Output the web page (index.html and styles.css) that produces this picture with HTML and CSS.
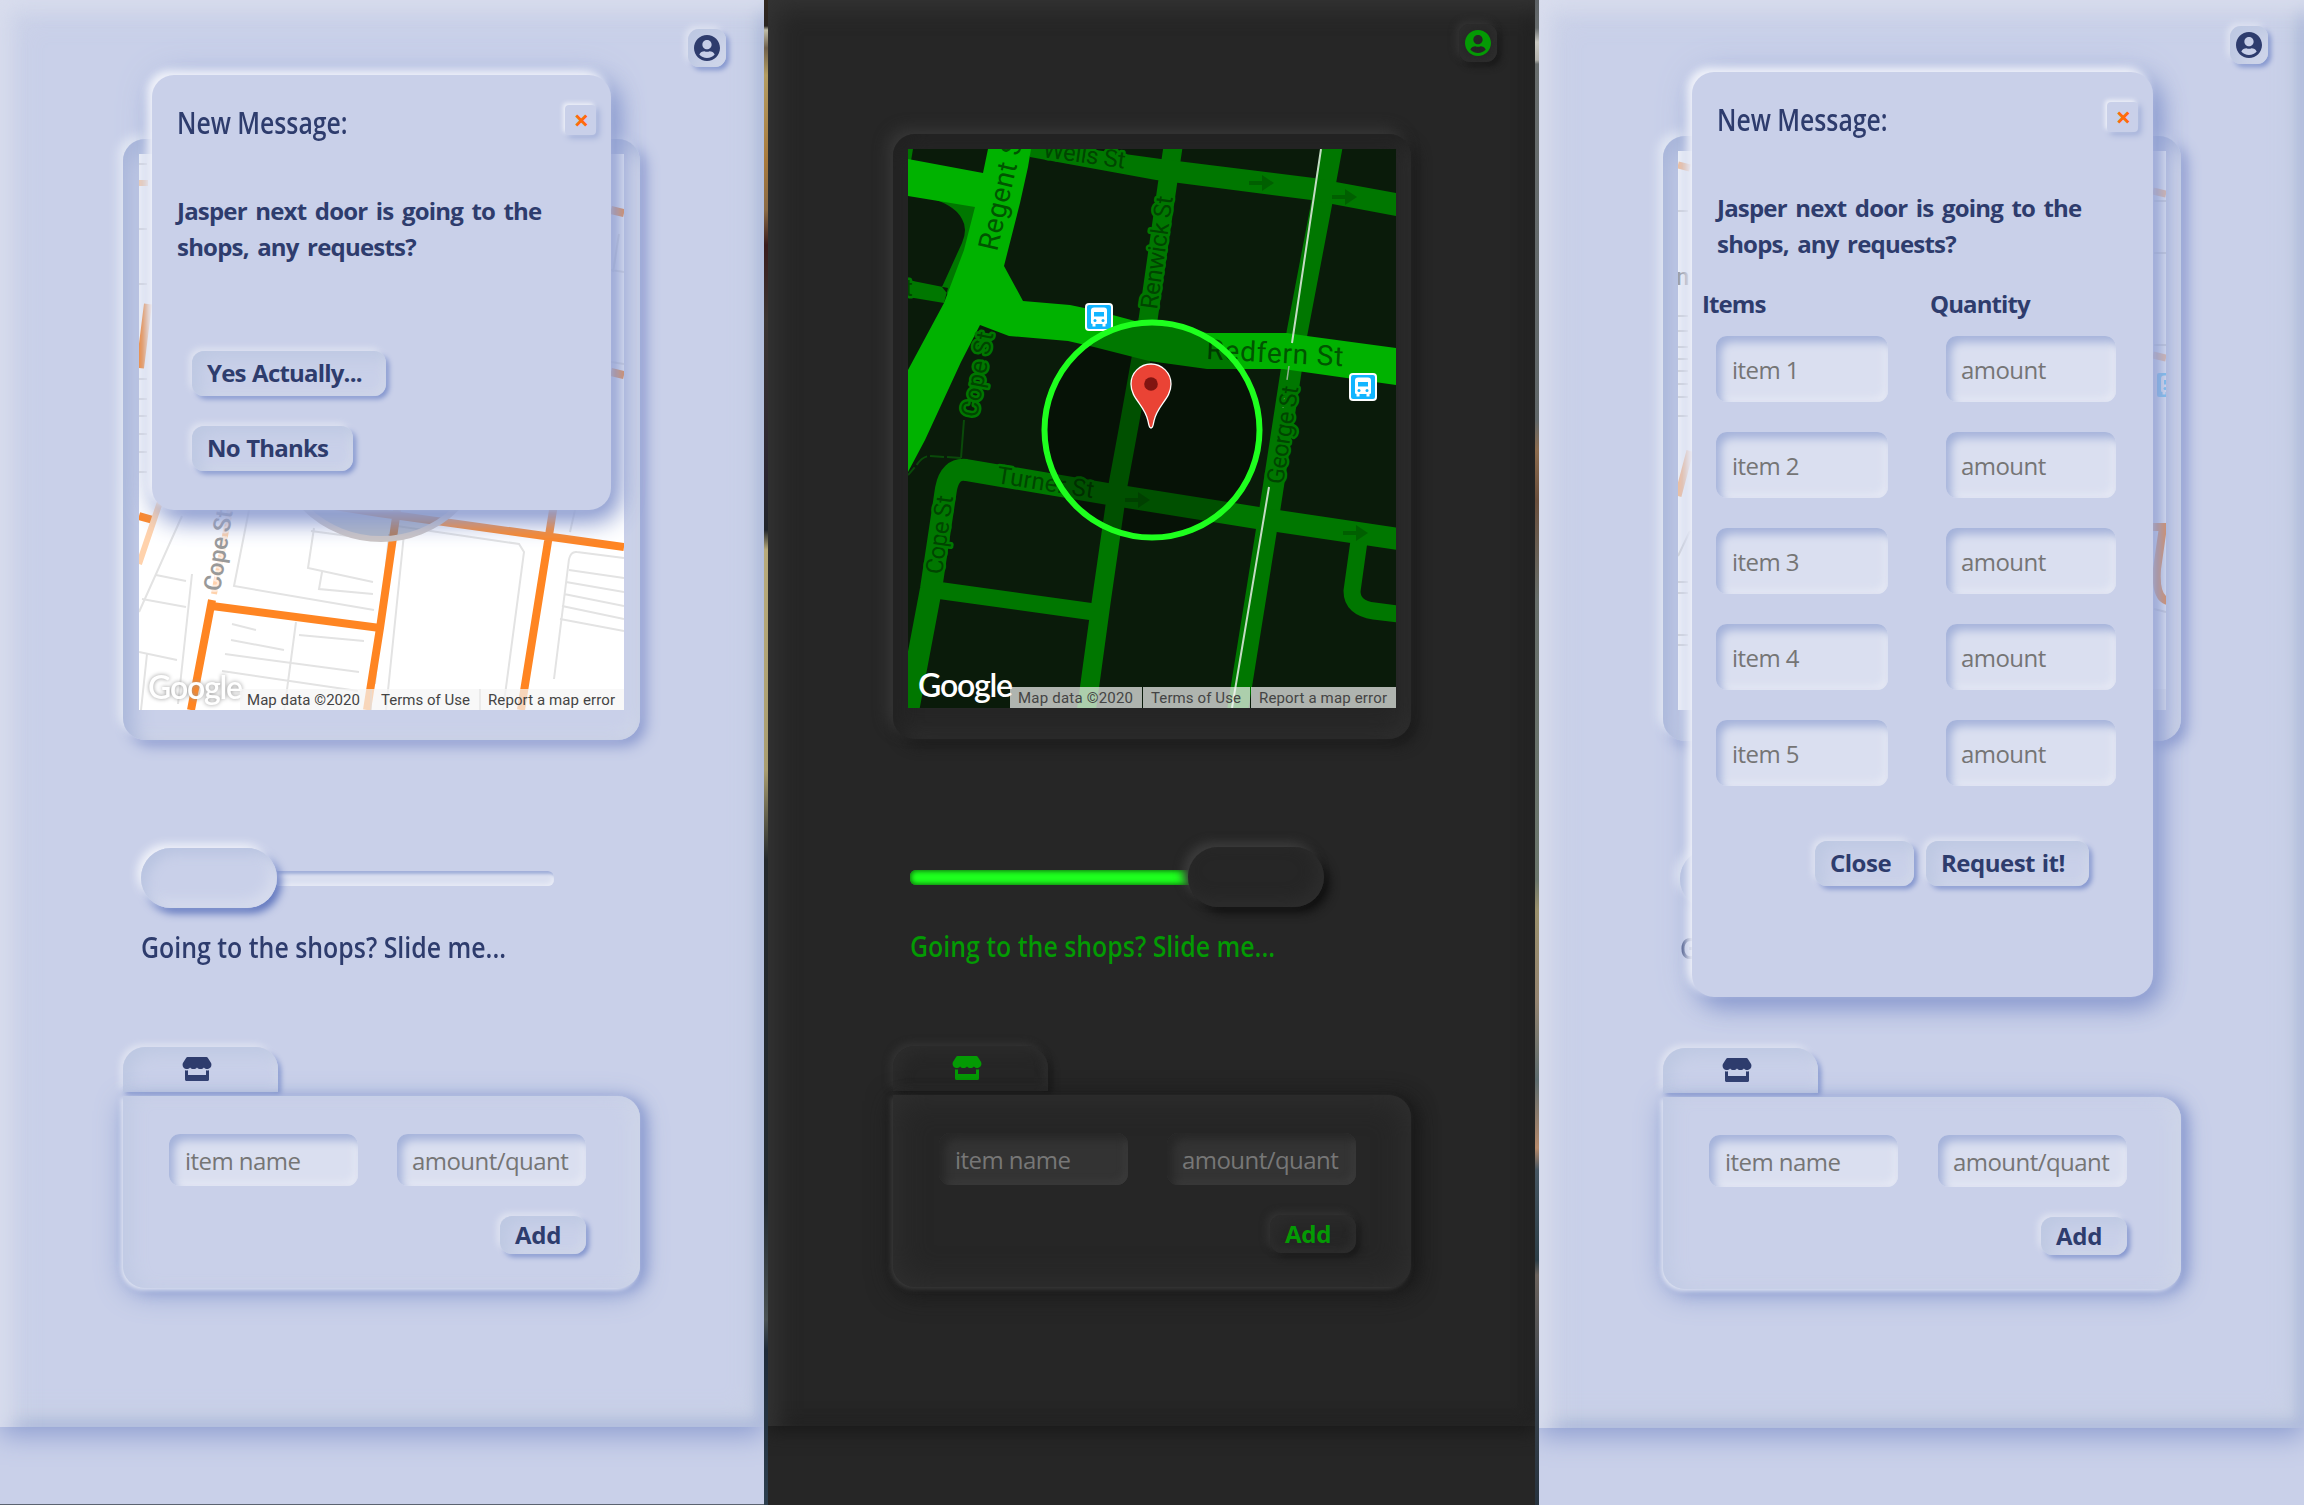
FILE: index.html
```html
<!DOCTYPE html>
<html lang="en">
<head>
<meta charset="utf-8">
<title>Neighbour Shop</title>
<link rel="stylesheet" href="styles.css">
</head>
<body>
<svg class="defs" aria-hidden="true">
  <symbol id="user" viewBox="0 8 496 496"><path d="M248 8C111 8 0 119 0 256s111 248 248 248 248-111 248-248S385 8 248 8zm0 96c48.600 0 88 39.400 88 88s-39.400 88-88 88-88-39.400-88-88 39.400-88 88-88zm0 344c-58.700 0-111.300-26.600-146.500-68.200 18.800-35.400 55.600-59.800 98.500-59.800 2.400 0 4.800.4 7.100 1.100 13 4.200 26.600 6.900 40.900 6.900 14.300 0 28-2.700 40.900-6.900 2.300-.7 4.700-1.100 7.100-1.100 42.900 0 79.700 24.400 98.500 59.800C359.300 421.400 306.700 448 248 448z"/></symbol>
  <symbol id="store" viewBox="0 0 616 512"><path d="M602 118.600L537.100 15C531.300 5.700 521 0 510 0H106C95 0 84.700 5.700 78.900 15L14 118.600c-33.500 53.500-3.800 127.900 58.800 136.400 4.500.6 9.100.9 13.700.9 29.600 0 55.800-13 73.800-33.100 18 20.100 44.300 33.100 73.800 33.100 29.600 0 55.800-13 73.800-33.100 18 20.100 44.300 33.100 73.800 33.100 29.600 0 55.800-13 73.800-33.100 18.100 20.100 44.300 33.100 73.800 33.100 4.700 0 9.200-.3 13.700-.9 62.800-8.400 92.600-82.800 59-136.400zM529.500 288c-10 0-19.900-1.500-29.500-3.800V384H116v-99.800c-9.600 2.200-19.500 3.800-29.500 3.800-6 0-12.100-.4-18-1.200-5.600-.8-11.100-2.100-16.400-3.600V480c0 17.700 14.300 32 32 32h448c17.700 0 32-14.300 32-32V283.200c-5.400 1.600-10.800 2.900-16.400 3.600-6.100.8-12.100 1.200-18.200 1.200z"/></symbol>
  <symbol id="bus" viewBox="0 0 28 28"><rect width="28" height="28" rx="4" fill="#fff"/><rect x="2" y="2" width="24" height="24" rx="2" fill="#12b5ff"/><path d="M9 4.500h10q3 0 3 3V20q0 1-1.500 1v2.500h-3V21h-7v2.500h-3V21Q6 21 6 20V7.500q0-3 3-3z" fill="#fff"/><path d="M9 9h10v4.500H9z" fill="#12b5ff"/><circle cx="10" cy="17.500" r="1.500" fill="#12b5ff"/><circle cx="18" cy="17.500" r="1.500" fill="#12b5ff"/></symbol>
  <symbol id="arrow" viewBox="0 0 25 16"><path d="M0 6h13V0l12 8-12 8v-6H0z" fill="#005f00"/></symbol>
</svg>

<div class="screens">
  <section class="screen light first">
    <main class="app">
      <header class="top"><button class="user"><svg><use href="#user"/></svg></button></header>
      <div class="card">
        <svg class="map" viewBox="0 0 485 556">
          <rect width="485" height="556" fill="#fff"/>
          <g fill="none" stroke="#e3e3e3" stroke-width="2">
            <path d="M0 10h8M0 75h8M0 130h8M0 225h8M0 245h8M0 262h8M0 280h8M0 298h8M0 318h8M472 116l13 2M472 208l13 2M480 80l-6 38"/>
            <path d="M43 362L0 458M53 420l-14 130M17 421l30 6M3 445l44 8M0 498l38 8M110 356L95 432l140 24M175 374l-6 40 65 14M183 418l-3 17 54 5M250 380l-14 150M265 380l-18 176M258 372l122 18 5 8-21 158M172 377l60 8M93 470l24 6M92 486l53 10M86 500l134 18M83 517l136 20M157 468l-12 90M160 481l65 6M430 405l-15 120M430 405q2-8 8-7l47 6M430 416l55 8M427 428l58 10M425 440l60 12M423 452l62 13M421 465l64 12M436 356l-5 22M8 500l-6 56"/>
          </g>
          <g fill="none" stroke="#ff8522" stroke-width="8">
            <path d="M0 362l14 4M170 348l70 11 245 34M258 356l-17 118-13 82M415 350l-33 206"/>
            <path d="M73 446L52 556M73 452l168 22"/>
            <path d="M472 56l13 3M472 218l13 3M9 150L1 214"/>
            <path d="M22 345L0 410M0 29h9M92 350L75 440" stroke="#ffd2ac" stroke-width="6"/>
          </g>
          <circle cx="242" cy="277" r="108" fill="#5c6b8a" fill-opacity=".5" stroke="#cdc6c4" stroke-width="6"/>
          <g class="road-grey"><text transform="translate(81 438) rotate(-81)" textLength="82">Cope St</text></g>
          <text class="google" x="9" y="545" textLength="95">Google</text>
          <path d="M101 535h384v21H101z" fill="#f5f5f5" fill-opacity=".72"/>
          <path d="M232 535v21M341 535v21" stroke="#ddd"/>
          <g class="terms"><text x="108" y="551" textLength="113">Map data ©2020</text><text x="242" y="551" textLength="89">Terms of Use</text><text x="349" y="551" textLength="127">Report a map error</text></g>
        </svg>
      </div>
      <div class="slider"><div class="track"></div><div class="thumb"></div></div>
      <p class="hint"><span>Going to the shops? Slide me...</span></p>
      <div class="tab"><svg><use href="#store"/></svg></div>
      <form class="list">
        <input placeholder="item name"><input placeholder="amount/quant">
        <button type="button" class="btn add">Add</button>
      </form>
    </main>
    <div class="modal message">
      <div class="modal-head"><h2>New Message:</h2><button class="close">×</button></div>
      <p class="ask">Jasper next door is going to the<br>shops, any requests?</p>
      <div class="answers"><button class="btn">Yes Actually...</button><button class="btn">No Thanks</button></div>
    </div>
  </section>

  <div class="seam seam-left"></div>

  <section class="screen dark">
    <main class="app">
      <header class="top"><button class="user"><svg><use href="#user"/></svg></button></header>
      <div class="card">
        <svg class="map" viewBox="0 0 488 559">
          <rect width="488" height="559" fill="#0a1b0a"/>
          <g fill="none" stroke="#0a4a0a" stroke-width="2"><path d="M56 271l-3 38"/><path d="M53 309l-31-2q-8 0-14 10l-8 9" stroke-dasharray="14 3"/></g>
          <g fill="none" stroke="#007700" stroke-linejoin="round">
            <path d="M265-2l-6 40-19 133-18 100-12 65-17 118-15 110" stroke-width="19"/>
            <path d="M424-2l-11 60-24 126-27 175-29 181-4 25" stroke-width="21"/>
            <path d="M490 390l-134-20-156-25-142-24Q42 319 38 340L23 440 0 562" stroke-width="22"/>
            <path d="M28 441l158 22M451 392l-7 50q0 17 22 20l24 3" stroke-width="17"/>
          </g>
          <path d="M122-8l131 18 153 19 82 15v23l-85-16-155-20L122 8zM28 51Q48 58 54 70q6 10 0 24L34 138l8 10L74 50zM0 131l40 8-4 15-36-6zM0 0h5L3 12H0z" fill="#007700"/>
          <path d="M80 0h43l-3 18-8 36-16 63 19 35 47 4 24 5 41 11 72 12h80l20 3 89 12v37l-113-16h-76l-58-8-55-14-26-6-59-5-29-11-19 37-36 78-17 32v-102l36-67 20-53 11-43L0 47V10l75 14z" fill="#00b200"/>
          <path d="M413 0l-29 194M361 338l-37 221" stroke="#c4dcc4" stroke-width="2"/><path d="M381 217l-16 110" stroke="#8fb08f" stroke-width="1.500" stroke-dasharray="14 5 4 5"/>
          <g><use href="#arrow" x="341" y="26" width="25" height="16"/><use href="#arrow" x="424" y="40" width="25" height="16"/><use href="#arrow" x="217" y="343" width="25" height="16"/><use href="#arrow" x="435" y="376" width="25" height="16"/></g>
          <g class="road-green">
            <text transform="translate(134 8) rotate(8)" textLength="83">Wells St</text>
            <text transform="translate(249 161) rotate(-82)" textLength="114">Renwick St</text>
            <text transform="translate(69 269) rotate(-79)" textLength="86">Cope St</text>
            <text transform="translate(34 426) rotate(-82)" textLength="79">Cope St</text>
            <text transform="translate(88 334) rotate(9)" textLength="98">Turner St</text>
            <text transform="translate(375 336) rotate(-81)" textLength="99">George St</text>
            <text transform="translate(-3 147)">t</text>
          </g>
          <g class="road-green big">
            <text transform="translate(89 103) rotate(-77)" textLength="124">Regent St</text>
            <text transform="translate(298 210) rotate(3)" textLength="137">Redfern St</text>
          </g>
          <use href="#bus" x="177" y="154" width="28" height="28"/>
          <circle cx="244" cy="281" r="107.500" fill="#000" fill-opacity=".32" stroke="#1eff1e" stroke-width="6"/>
          <use href="#bus" x="441" y="224" width="28" height="28"/>
          <path d="M243 279c-2 0-2-3-3-7-3-16-17-22-17-37a20 20 0 0 1 40 0c0 15-14 21-17 37-1 4-1 7-3 7z" fill="#ea4335" stroke="#fff" stroke-width="1.300"/><circle cx="243" cy="235" r="6.800" fill="#811411"/>
          <text class="google" x="10" y="548" textLength="95">Google</text>
          <path d="M102 538h132v21H102zM235 538h107v21H235zM343 538h145v21H343z" fill="#f5f5f5" fill-opacity=".7"/>
          <g class="terms"><text x="110" y="554" textLength="115">Map data ©2020</text><text x="243" y="554" textLength="90">Terms of Use</text><text x="351" y="554" textLength="128">Report a map error</text></g>
        </svg>
      </div>
      <div class="slider on"><div class="track"></div><div class="thumb"></div></div>
      <p class="hint"><span>Going to the shops? Slide me...</span></p>
      <div class="tab"><svg><use href="#store"/></svg></div>
      <form class="list">
        <input placeholder="item name"><input placeholder="amount/quant">
        <button type="button" class="btn add">Add</button>
      </form>
    </main>
  </section>

  <div class="seam seam-right"></div>

  <section class="screen light third">
    <main class="app">
      <header class="top"><button class="user"><svg><use href="#user"/></svg></button></header>
      <div class="card">
        <svg class="map" viewBox="0 0 488 559">
          <rect width="488" height="559" fill="#fff"/>
          <path d="M0 60h10M0 165h10M0 180h10M0 196h10M0 208h10M0 220h10M0 233h10M0 246h10M0 265h10M12 380L0 405M0 431h10M0 442h10M0 484h10M0 494h10M476 50h12M476 102h12M476 194h12M476 458l12 3" stroke="#dedede" stroke-width="2"/>
          <g fill="none" stroke="#ff9a4c"><path d="M0 14l12 3M0 345L12 300M475 40l13 3M475 204l13 3" stroke-width="7" opacity=".6"/><path d="M474 376h14M485 376l-6 42q-2 28 10 32" stroke="#ff8522" stroke-width="8"/></g>
          <g class="road-grey"><text x="-2" y="134">n</text></g>
          <use href="#bus" x="477" y="220" width="28" height="28" opacity=".6"/>
          <path d="M100 538h388v21H100z" fill="#f5f5f5"/>
        </svg>
      </div>
      <div class="slider"><div class="track"></div><div class="thumb"></div></div>
      <p class="hint"><span>Going to the shops? Slide me...</span></p>
      <div class="tab"><svg><use href="#store"/></svg></div>
      <form class="list">
        <input placeholder="item name"><input placeholder="amount/quant">
        <button type="button" class="btn add">Add</button>
      </form>
    </main>
    <div class="modal order">
      <div class="modal-head"><h2>New Message:</h2><button class="close">×</button></div>
      <p class="ask">Jasper next door is going to the<br>shops, any requests?</p>
      <div class="order-grid">
        <b>Items</b><b>Quantity</b>
        <input placeholder="item 1"><input placeholder="amount">
        <input placeholder="item 2"><input placeholder="amount">
        <input placeholder="item 3"><input placeholder="amount">
        <input placeholder="item 4"><input placeholder="amount">
        <input placeholder="item 5"><input placeholder="amount">
      </div>
      <div class="order-actions"><button class="btn">Close</button><button class="btn">Request it!</button></div>
    </div>
  </section>
</div>
</body>
</html>
```
FILE: styles.css
```css
* { box-sizing: border-box; }
body { margin: 0; width: 2304px; height: 1505px; overflow: hidden; font-family: "Open Sans", "Noto Sans", sans-serif; font-size: 24px; }
button, input { font: inherit; border: 0; outline: 0; margin: 0; }
.defs { position: absolute; width: 0; height: 0; }
.screens { display: flex; height: 1505px; }

.screen { position: relative; overflow: hidden; background: var(--bg); color: var(--ink); }
.light {
  --bg: #c9d0e9; --ink: #2e3c6d;
  --app: inset 9px 9px 18px #dbdfefcc, inset 24px 24px 30px -12px #d2d8e8cc, inset -6px -6px 14px #a9b6da, inset -12px -12px 26px #c6cfe2, 0 8px 26px #8d9dd0;
  --card: -5px -5px 10px #e4e9f4, 6px 6px 14px #8d9bd0, inset 10px 10px 20px #a9b6da, inset -6px -6px 14px #d0d6e8;
  --raise: -3px -3px 6px #dfe3f1, 3px 3px 5px #8093cd, inset 8px 6px 16px #bdc8e2, inset -4px -4px 8px #d2d8ea;
  --panel: -2px 2px 4px #e0e5f3, 6px 2px 14px #8b9bd0, 0 6px 28px #93a3d3, inset 12px 0 18px -4px #c0cae4, inset -14px 0 20px -6px #cfd6e8;
  --thumb: -4px -4px 8px #f1f3fa, 4px 5px 8px #5a71bc, inset 6px 6px 12px #b9c4e1, inset -6px -6px 14px #d8ddee;
  --field: #dadff0;
  --sunk: inset 5px 6px 8px #a4b2da, inset -4px -4px 7px #e5e8f4;
  --place: #757575;
}
.dark {
  --bg: #262626; --ink: #049a04;
  --app: inset 9px 9px 22px #343434, inset -6px -6px 16px #1f1f1f, 0 6px 16px #1a1a1a;
  --card: -6px -6px 14px #363636, 6px 6px 14px #1a1a1a, inset 8px 8px 20px #212121, inset -6px -6px 20px #303030;
  --raise: -3px -3px 7px #333, 4px 4px 7px #191919, inset 6px 6px 14px #2c2c2c, inset -4px -4px 8px #2e2e2e;
  --panel: -2px 2px 5px #3b3b3b, 8px 2px 16px #1a1a1a, 0 6px 26px #1c1c1c, inset 0 0 34px #313131;
  --thumb: -5px -5px 10px #3b3b3b, 6px 6px 10px #111, inset -6px -6px 16px #2d2d2d;
  --field: #333;
  --sunk: inset 6px 6px 9px #272727, inset -4px -4px 6px #3b3b3b;
  --place: #777;
}
.first { width: 764px; --left: 123px; --right: 38px; --top: 29px; --card-w: 517px; --card-h: 601px; --map-w: 485px; --map-h: 556px; --app-h: 1427px; border-bottom: 1px solid #5b6370; }
.dark { width: 767px; --left: 125px; --right: 38px; --top: 24px; --card-w: 518px; --card-h: 605px; --map-w: 488px; --map-h: 559px; --app-h: 1426px; }
.third { width: 765px; --left: 124px; --right: 36px; --top: 26px; --card-w: 518px; --card-h: 605px; --map-w: 488px; --map-h: 559px; --app-h: 1428px; }
.seam-left { width: 4px; background: linear-gradient(#32281f 0, #2a2521 26px, #c0bda8 30px, #6f604c 48px, #b39c62 75px, #a8793c 160px, #8a6a45 210px, #3a1c1c 245px, #3b3533 320px, #2a2430 480px, #20242a 530px, #b8aa7b 550px, #a99d70 770px, #23282c 860px, #222a30 1200px, #4a5254 1320px, #1e2a38 1350px, #2d3f4e 1505px); }
.seam-right { width: 4px; background: linear-gradient(#5d6266 0, #666b6c 28px, #c8c8c2 42px, #b4b3ad 60px, #686d6d 64px, #606769 420px, #8c6c4e 450px, #6a4f3c 500px, #676e6a 600px, #6b766c 880px, #9a906c 910px, #948470 1000px, #5d6c6e 1080px, #b5896a 1148px, #465662 1170px, #2d3f48 1260px, #6a625c 1275px, #38424c 1400px, #26323e 1505px); }

.app { height: var(--app-h); padding: var(--top) 0 0 var(--left); box-shadow: var(--app); display: flex; flex-direction: column; align-items: flex-start; }
.top { align-self: flex-end; margin: 0 var(--right) 72px 0; height: 38px; }
.user { display: grid; place-items: center; width: 38px; height: 38px; padding: 0; border-radius: 11px; background: var(--bg); box-shadow: var(--raise); }
.user svg { width: 26px; height: 26px; fill: var(--ink); }
.card { flex: none; width: var(--card-w); height: var(--card-h); padding-top: 15px; border-radius: 22px; box-shadow: var(--card); display: flex; justify-content: center; align-items: flex-start; }
.map { display: block; width: var(--map-w); height: var(--map-h); }
.slider { margin: 108px 0 0 17px; width: 414px; height: 60px; display: grid; align-items: center; }
.first .slider { margin-left: 18px; }
.track, .thumb { grid-area: 1 / 1; }
.track { height: 15px; width: 413px; border-radius: 6px; background: var(--field); box-shadow: inset 2px 3px 3px #a1afd9, inset -2px -2px 4px #e8ebf6; }
.thumb { width: 136px; height: 60px; border-radius: 30px; background: var(--bg); box-shadow: var(--thumb); }
.on .track { background: #1eff1e; box-shadow: inset 0 0 5px 1px #0c6b0c; }
.on .thumb { justify-self: end; }
.hint { margin: 0 0 0 17px; height: 139px; padding-top: 18px; font-size: 29px; line-height: 42px; font-weight: 600; white-space: nowrap; }
.first .hint { margin-left: 18px; }
.hint span, h2 { display: block; transform-origin: 0 50%; transform: scaleX(.858); }
.tab { flex: none; width: 155px; height: 45px; margin-bottom: 4px; padding: 0 8px 1px 0; border-radius: 22px 22px 0 0; background: var(--bg); box-shadow: var(--raise); display: grid; place-items: center; }
.tab svg { width: 30px; height: 24px; fill: var(--ink); }
.list { flex: none; width: var(--card-w); height: 192px; padding: 38px 54px 0 46px; border-radius: 0 22px 22px 22px; background: var(--bg); box-shadow: var(--panel); display: grid; grid-template-columns: 189px 189px; grid-template-rows: 52px 38px; gap: 30px 0; justify-content: space-between; }
.dark .list { padding-right: 55px; }
input { width: 100%; min-width: 0; padding: 1px 12px 0 16px; border-radius: 11px; background: var(--field); box-shadow: var(--sunk); letter-spacing: -.55px; }
input:nth-of-type(even) { padding-left: 15px; }
input::placeholder { color: var(--place); opacity: 1; }
.btn { height: 45px; padding: 0 15px 2px; border-radius: 12px; background: var(--bg); box-shadow: var(--raise); color: var(--ink); font-weight: 700; letter-spacing: -.8px; word-spacing: 1px; text-align: left; white-space: nowrap; line-height: 1; }
.add { grid-column: 2; justify-self: end; width: 86px; height: 38px; padding-bottom: 0; letter-spacing: -.3px; }

.modal { position: absolute; border-radius: 22px; background: var(--bg); box-shadow: -5px -5px 9px #f0f2fa, 8px 10px 24px #8797ce, 0 0 34px #a9b7dc; }
.message { left: 152px; top: 75px; width: 459px; height: 435px; }
.order { left: 153px; top: 72px; width: 461px; height: 925px; }
.modal-head { display: flex; justify-content: space-between; align-items: flex-start; padding: 30px 15px 0 25px; height: 84px; }
h2 { margin: -2px 0 0; font-size: 30px; line-height: 40px; font-weight: 600; white-space: nowrap; transform: scaleX(.825); }
.close { width: 31px; height: 30px; padding: 0 0 0 2px; border-radius: 4px; background: var(--bg); box-shadow: -2px -2px 4px #f1f3fa, 3px 3px 6px #a0aed8; color: #ff6a0a; font-weight: 700; font-size: 27px; line-height: 28px; }
.ask { margin: 0; padding: 34px 0 0 25px; line-height: 36px; font-weight: 700; letter-spacing: -.8px; word-spacing: 3px; white-space: nowrap; }
.answers { display: flex; flex-direction: column; gap: 30px; padding: 86px 0 0 40px; }
.answers .btn:first-child { width: 194px; }
.answers .btn:last-child { width: 161px; }
.order-grid { margin: 24px 0 0 24px; display: grid; grid-template-columns: 172px 170px; column-gap: 58px; grid-template-rows: 20px repeat(5, 66px); row-gap: 30px; }
.order-grid b { margin-left: -14px; font-weight: 700; letter-spacing: -.9px; height: 36px; line-height: 36px; }
.order-grid b + b { margin-left: -16px; }
.order-actions { display: flex; gap: 12px; padding: 55px 0 0 123px; }
.order-actions .btn { letter-spacing: -.5px; }
.order-actions .btn:first-child { width: 99px; }
.order-actions .btn:last-child { width: 163px; }

.google { font: 600 32px "Lato", sans-serif; fill: #fff; }
.light .google { filter: drop-shadow(0 0 2px #999); }
.terms { font: 15px Roboto, sans-serif; fill: #444; }
.road-green { font: 24px Roboto, sans-serif; fill: #004500; stroke: #007700; stroke-width: 5px; paint-order: stroke; stroke-linejoin: round; }
.road-green.big { font-size: 28px; stroke: none; fill: #005500; }
.road-grey { font: 500 24px Roboto, sans-serif; fill: #999; stroke: #fff; stroke-width: 4px; stroke-opacity: .6; paint-order: stroke; }
```
